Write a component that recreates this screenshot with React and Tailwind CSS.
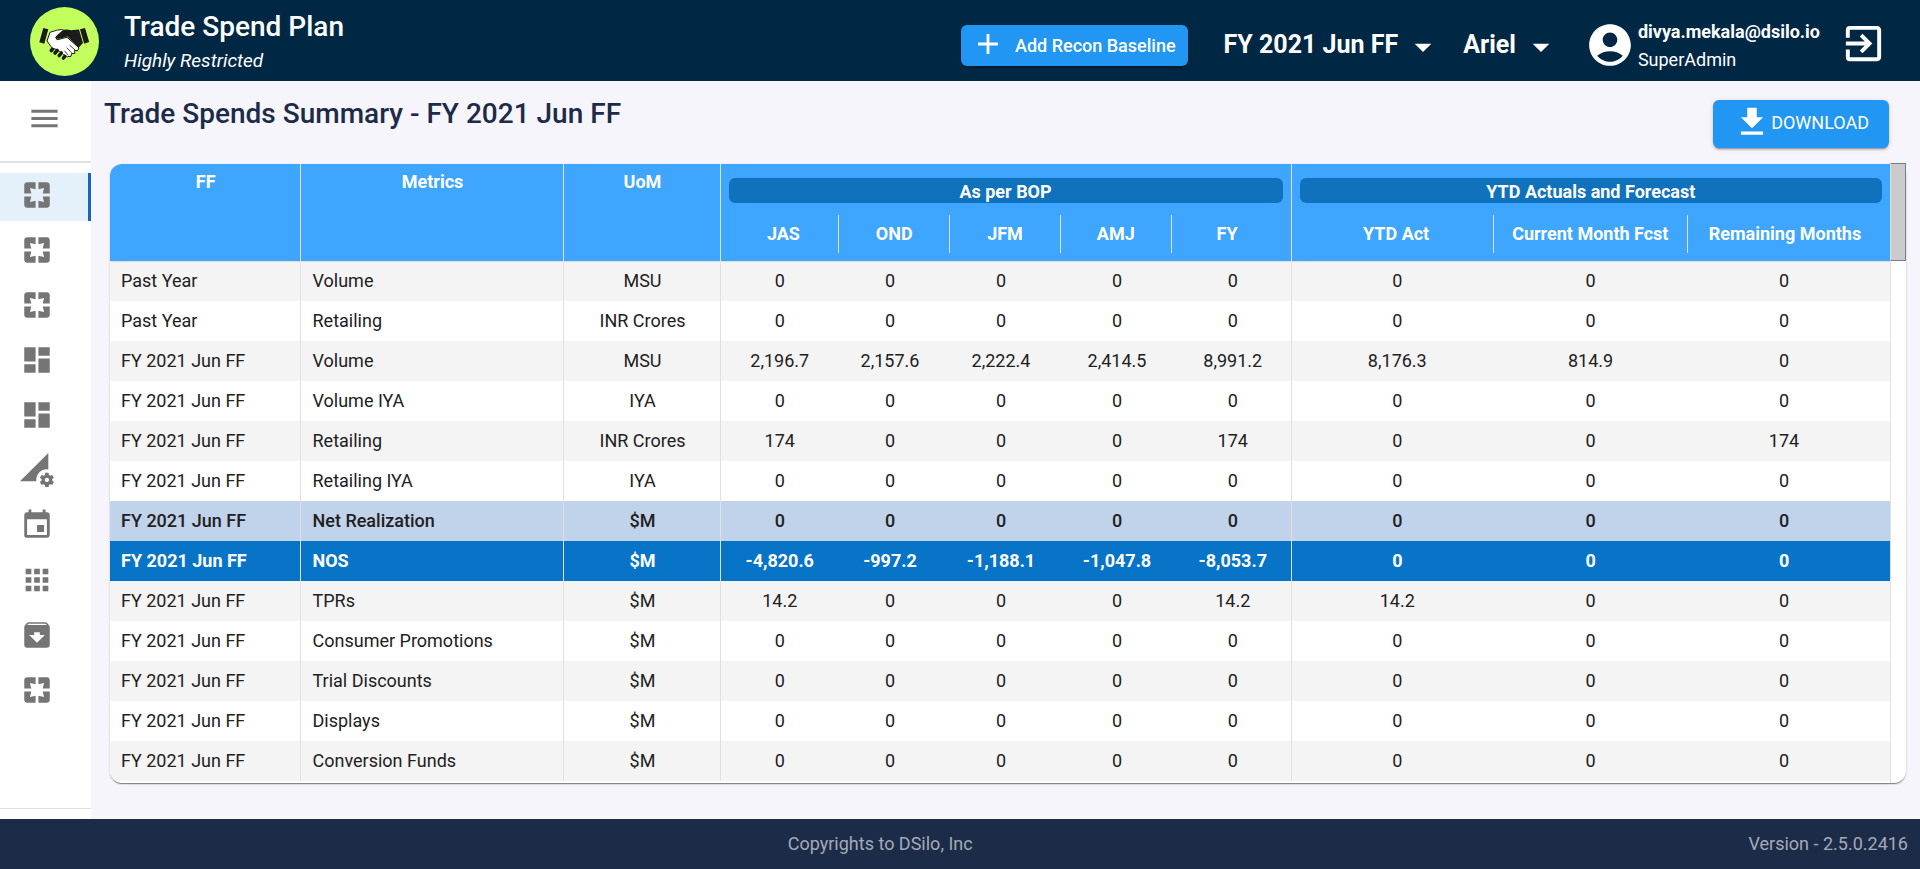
import {
  MdAdd, MdMenu, MdPages, MdDashboard, MdPermDataSetting, MdEvent, MdApps,
  MdArchive, MdAccountCircle, MdExitToApp, MdFileDownload, MdArrowDropDown,
} from "react-icons/md";

const NAV = [
  { label: "Trade spends summary", Icon: MdPages, active: true },
  { label: "Trade spends detail", Icon: MdPages },
  { label: "Recon baseline", Icon: MdPages },
  { label: "Dashboard", Icon: MdDashboard },
  { label: "Brand dashboard", Icon: MdDashboard },
  { label: "Data settings", Icon: MdPermDataSetting },
  { label: "Calendar", Icon: MdEvent },
  { label: "Applications", Icon: MdApps },
  { label: "Archive", Icon: MdArchive },
  { label: "Reports", Icon: MdPages },
];

const FF = "FY 2021 Jun FF";
const ZERO = ["0", "0", "0", "0", "0", "0", "0", "0"];

const ROWS = [
  { ff: "Past Year", metric: "Volume", uom: "MSU", values: ZERO },
  { ff: "Past Year", metric: "Retailing", uom: "INR Crores", values: ZERO },
  { ff: FF, metric: "Volume", uom: "MSU", values: ["2,196.7", "2,157.6", "2,222.4", "2,414.5", "8,991.2", "8,176.3", "814.9", "0"] },
  { ff: FF, metric: "Volume IYA", uom: "IYA", values: ZERO },
  { ff: FF, metric: "Retailing", uom: "INR Crores", values: ["174", "0", "0", "0", "174", "0", "0", "174"] },
  { ff: FF, metric: "Retailing IYA", uom: "IYA", values: ZERO },
  { ff: FF, metric: "Net Realization", uom: "$M", values: ZERO, tone: "soft" },
  { ff: FF, metric: "NOS", uom: "$M", values: ["-4,820.6", "-997.2", "-1,188.1", "-1,047.8", "-8,053.7", "0", "0", "0"], tone: "strong" },
  { ff: FF, metric: "TPRs", uom: "$M", values: ["14.2", "0", "0", "0", "14.2", "14.2", "0", "0"] },
  { ff: FF, metric: "Consumer Promotions", uom: "$M", values: ZERO },
  { ff: FF, metric: "Trial Discounts", uom: "$M", values: ZERO },
  { ff: FF, metric: "Displays", uom: "$M", values: ZERO },
  { ff: FF, metric: "Conversion Funds", uom: "$M", values: ZERO },
];

const TONES = {
  soft: "bg-[#c0d3ea] font-medium",
  strong: "bg-[#0874c8] font-bold text-white",
};

const COLS = [
  "w-[190px]", "w-[263px]", "w-[157px]",
  "w-[117px]", "w-[104px]", "w-[118px]", "w-[114px]", "w-[118px]",
  "w-[212px]", "w-[175px]", "w-[212px]",
];

const RAISED =
  "shadow-[0_3px_1px_-2px_rgba(0,0,0,0.2),0_2px_2px_0_rgba(0,0,0,0.14),0_1px_5px_0_rgba(0,0,0,0.12)]";

function Logo() {
  return (
    <svg viewBox="0 0 69 69" className="size-[69px] shrink-0" role="img" aria-label="Handshake">
      <circle cx="34.5" cy="34.5" r="34.5" fill="#c2ff5c" />
      <g fill="#1b1b1b">
        <path d="M13.300 21l5 1.200-4 14.600-5-1.500z" />
        <path d="M50 22.300l5-1.300 4.200 14-5 1.700z" />
      </g>
      <path
        d="M17 34l3-8.700 6.500-2 5-.800 3 1-8.500 6.800 1 2.500 10-2.500 12 10.500-1.500 3-3-.500.500 3-3.500.300-.500 2.700-3.500.500-4-2.300-5.500-4.500-6-2z"
        fill="#fff"
        stroke="#1b1b1b"
        strokeWidth="1"
        strokeLinejoin="round"
      />
      <path d="M25.500 31.200c-.8-1.200 2.500-4.300 7.500-8 2.500-1.500 5.500-.5 8 0l8-.7 4 13.500-4.500 4.700L37.500 29.500c-3.500.5-7.500 3.500-12 1.700z" fill="#1b1b1b" />
      <path d="M37 41l4.500 4.500M40 38.500l5 4.500M34.500 44l3.500 4" stroke="#1b1b1b" strokeWidth="0.8" fill="none" strokeLinecap="round" />
      <g stroke="#1b1b1b" strokeWidth="3.6" strokeLinecap="round">
        <path d="M21.300 43.500l1-1" />
        <path d="M25 46l2.200-2.500" />
        <path d="M29.300 48.500l2-2.500" />
        <path d="M33.500 51l1.200-1.500" />
      </g>
    </svg>
  );
}

function HeaderMenu({ children }) {
  return (
    <button type="button" className="flex items-center gap-[5px] text-[25px] font-bold leading-8">
      {children}
      <MdArrowDropDown className="mt-1 size-10" />
    </button>
  );
}

function GroupHeader({ title, columns, className }) {
  return (
    <div className="px-2 pt-[14px]">
      <div className="h-[25px] rounded-md bg-[#1072bd] leading-7">{title}</div>
      <div className={"mt-3 grid h-[38px] items-center leading-[38px] " + className}>
        {columns.map((name, i) => (
          <div key={name} className={i < columns.length - 1 ? "border-r border-[#e0e0e0]" : ""}>
            {name}
          </div>
        ))}
      </div>
    </div>
  );
}

function SummaryTable() {
  return (
    <table className="w-full table-fixed border-collapse text-center text-lg leading-6 text-[#212121]">
      <colgroup>
        {COLS.map((w, i) => <col key={i} className={w} />)}
      </colgroup>
      <thead className="bg-[#3ea6ff] text-white">
        <tr className="h-[97px] border-b border-[#e0e0e0] align-top">
          {["FF", "Metrics", "UoM"].map((name) => (
            <th key={name} scope="col" className="border-r border-[#e0e0e0] pl-0.5 pt-[6px] font-bold">{name}</th>
          ))}
          <th colSpan={5} scope="colgroup" className="border-r border-[#e0e0e0] font-bold">
            <GroupHeader title="As per BOP" columns={["JAS", "OND", "JFM", "AMJ", "FY"]} className="grid-cols-5" />
          </th>
          <th colSpan={3} scope="colgroup" className="font-bold">
            <GroupHeader
              title="YTD Actuals and Forecast"
              columns={["YTD Act", "Current Month Fcst", "Remaining Months"]}
              className="grid-cols-3"
            />
          </th>
        </tr>
      </thead>
      <tbody>
        {ROWS.map((row, r) => (
          <tr key={r} className={"h-10 " + (row.tone ? TONES[row.tone] : r % 2 === 0 ? "bg-[#f4f4f4]" : "bg-white")}>
            <td className="border-r border-[#e0e0e0] pl-[11px] text-left">{row.ff}</td>
            <td className="border-r border-[#e0e0e0] pl-3 text-left">{row.metric}</td>
            <td className="border-r border-[#e0e0e0] pl-0.5">{row.uom}</td>
            {row.values.map((value, i) => (
              <td key={i} className={i === 4 ? "border-r border-[#e0e0e0] pl-0.5" : i < 4 ? "pl-0.5" : ""}>{value}</td>
            ))}
          </tr>
        ))}
      </tbody>
    </table>
  );
}

export default function App() {
  return (
    <div className="flex min-h-screen flex-col bg-[#f6f5fc] font-[Roboto,sans-serif]">
      <header className="flex h-[81px] items-center bg-[#002844] pl-[30px] pr-[33px] pt-0.5 text-white">
        <Logo />
        <div className="ml-[25px] pt-0.5">
          <h1 className="text-[28px] font-medium leading-9">Trade Spend Plan</h1>
          <p className="text-[19px] italic leading-8">Highly Restricted</p>
        </div>
        <div className="ml-auto flex items-center pt-1.5">
          <button type="button" className={"mt-0.5 flex h-[41px] items-center gap-[10px] rounded-md bg-[#2196f3] pl-[10px] pr-3 text-lg font-medium " + RAISED}>
            <MdAdd className="mb-1 size-[34px]" />
            Add Recon Baseline
          </button>
          <div className="ml-9 flex items-center gap-5">
            <HeaderMenu>FY 2021 Jun FF</HeaderMenu>
            <HeaderMenu>Ariel</HeaderMenu>
          </div>
          <MdAccountCircle className="ml-6 size-[50px]" />
          <div className="ml-[3px] pt-0.5 text-lg leading-7">
            <p className="font-bold">divya.mekala@dsilo.io</p>
            <p>SuperAdmin</p>
          </div>
          <button type="button" aria-label="Sign out" className="ml-5 pb-0.5">
            <MdExitToApp className="size-[47px]" />
          </button>
        </div>
      </header>

      <div className="flex flex-1">
        <nav aria-label="Main" className="flex w-[91px] shrink-0 flex-col bg-white text-[#757575]">
          <button type="button" aria-label="Toggle menu" className="flex h-20 items-center justify-center pb-1.5 pr-0.5">
            <MdMenu className="size-[35px]" />
          </button>
          <ul className="flex flex-1 flex-col gap-[7px] border-t-2 border-[#e0e0e0] pt-[10px]">
            {NAV.map(({ label, Icon, active }) => (
              <li key={label}>
                <a
                  href="#"
                  aria-label={label}
                  className={
                    "flex h-12 items-center border-r-[3px] pl-[20px] pb-1 " +
                    (active ? "border-[#1565c0] bg-[#e4f1fb]" : "border-transparent")
                  }
                >
                  <Icon className="size-[34px]" />
                </a>
              </li>
            ))}
          </ul>
          <div className="h-[11px] border-t border-[#e0e0e0]" />
        </nav>

        <main className="flex-1 pb-9 pl-[13px] pr-[14px]">
          <div className="flex h-[83px] justify-between pr-[17px] pt-[19px]">
            <h2 className="text-[28px] font-medium leading-7 text-[#1c2b48]">Trade Spends Summary - FY 2021 Jun FF</h2>
            <button type="button" className={"flex h-12 items-center rounded-md bg-[#2196f3] px-5 pb-0.5 text-lg text-white " + RAISED}>
              <MdFileDownload className="mb-0.5 size-[38px]" />
              DOWNLOAD
            </button>
          </div>
          <div className="ml-[6px] flex rounded-xl bg-white shadow-[0_2px_1px_-1px_rgba(0,0,0,0.3),0_1px_1px_0_rgba(0,0,0,0.2),0_1px_3px_0_rgba(0,0,0,0.12)]">
            <div className="flex-1 overflow-hidden rounded-l-xl pb-0.5">
              <SummaryTable />
            </div>
            <div className="-mt-px flex w-4 shrink-0 flex-col">
              <div className="h-[98px] border border-[#708090] border-l-[#e0e0e0] bg-[#cbcbcb]" />
              <div className="flex-1 border-l border-[#e0e0e0]" />
            </div>
          </div>
        </main>
      </div>

      <footer className="flex h-[50px] items-center bg-[#1c2b48] px-3 text-lg text-[#a4aab6]">
        <span className="flex-1 text-center">Copyrights to DSilo, Inc</span>
        <span>Version - 2.5.0.2416</span>
      </footer>
    </div>
  );
}
